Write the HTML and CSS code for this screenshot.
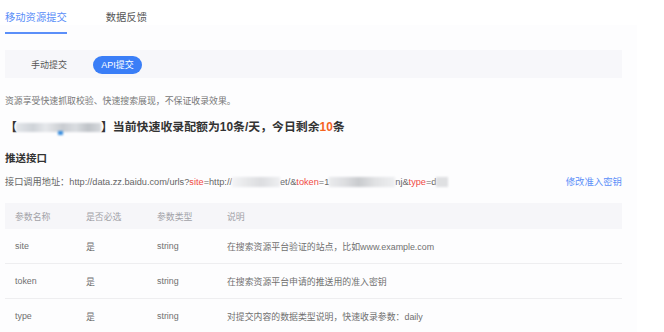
FILE: index.html
```html
<!DOCTYPE html>
<html lang="zh-CN">
<head>
<meta charset="utf-8">
<title>移动资源提交</title>
<link rel="stylesheet" href="styles.css">
</head>
<body>
<div class="page">
  <div class="tabs">
    <div class="tab active">移动资源提交</div>
    <div class="tab">数据反馈</div>
  </div>
  <div class="panel">
    <div class="subbar">
      <span class="sub">手动提交</span>
      <span class="pill">API提交</span>
    </div>
    <p class="desc">资源享受快速抓取校验、快速搜索展现，不保证收录效果。</p>
    <h2 class="quota"><span class="br">【</span><span class="blur blur-name"><i class="dot"></i></span><span class="br">】</span>当前快速收录配额为10条/天，今日剩余<span class="orange">10</span>条</h2>
    <h3 class="sect">推送接口</h3>
    <div class="urlrow">
      <div class="url">接口调用地址：http://data.zz.baidu.com/urls?<span class="red">site</span>=http://<span class="blur blur-a"></span>et/&amp;<span class="red">token</span>=1<span class="blur blur-b"></span>nj&amp;<span class="red">type</span>=d<span class="blur blur-c"></span></div>
      <a class="link">修改准入密钥</a>
    </div>
    <table class="params">
      <thead>
        <tr><th class="c1">参数名称</th><th class="c2">是否必选</th><th class="c3">参数类型</th><th>说明</th></tr>
      </thead>
      <tbody>
        <tr><td>site</td><td>是</td><td>string</td><td>在搜索资源平台验证的站点，比如www.example.com</td></tr>
        <tr><td>token</td><td>是</td><td>string</td><td>在搜索资源平台申请的推送用的准入密钥</td></tr>
        <tr><td>type</td><td>是</td><td>string</td><td>对提交内容的数据类型说明，快速收录参数：daily</td></tr>
      </tbody>
    </table>
  </div>
</div>
</body>
</html>
```

FILE: styles.css
```css
html, body {
  margin: 0;
  padding: 0;
  background: #fff;
}
body {
  font-family: "Liberation Sans", "Noto Sans CJK SC", sans-serif;
  color: #555;
  width: 664px;
  height: 332px;
  overflow: hidden;
}
.page {
  padding-left: 5px;
  width: 632px;
  background: linear-gradient(#fff 0, #fff 25px, #fdfdfe 25px);
  min-height: 332px;
}
.tabs {
  display: flex;
  height: 34px;
}
.tab {
  box-sizing: border-box;
  height: 34px;
  padding-top: 11px;
  font-size: 10.3px;
  line-height: 13px;
  color: #555;
  margin-right: 39px;
}
.tab.active {
  color: #5a8ef8;
  border-bottom: 2px solid #5b8ff9;
}
.panel {
  width: 617px;
}
.subbar {
  margin-top: 16px;
  height: 28px;
  background: #f7f7fa;
  display: flex;
  align-items: center;
  padding-left: 26px;
  font-size: 9px;
}
.sub {
  color: #555;
}
.pill {
  margin-left: 26px;
  width: 49px;
  height: 18px;
  border-radius: 9px;
  background: #3a7ef7;
  color: #fff;
  display: flex;
  align-items: center;
  justify-content: center;
  margin-top: 1px;
}
.desc {
  margin: 16px 0 0;
  font-size: 8.9px;
  line-height: 14px;
  color: #777;
}
.quota {
  margin: 10px 0 0;
  font-size: 11.9px;
  line-height: 18px;
  font-weight: bold;
  color: #333;
  display: flex;
  align-items: center;
  white-space: nowrap;
}
.br {
  display: inline-block;
}
.orange {
  color: #f5641e;
}
.blur {
  display: inline-block;
  position: relative;
  vertical-align: middle;
  filter: blur(1.2px);
}
.blur-name {
  width: 85px;
  height: 9px;
  margin: 0 0 0 -1px;
  background: linear-gradient(90deg, #e3e6ea 0, #cfd3d8 20%, #e6e8eb 35%, #c9ccd1 55%, #dadde1 70%, #bfc3c8 85%, #d6d9dd 100%);
}
.dot {
  position: absolute;
  left: 42px;
  bottom: -3px;
  width: 5px;
  height: 4px;
  background: #3a8fe0;
}
.sect {
  margin: 15px 0 0;
  font-size: 10.5px;
  line-height: 14px;
  font-weight: bold;
  color: #333;
}
.urlrow {
  margin-top: 10px;
  display: flex;
  justify-content: space-between;
  align-items: center;
  line-height: 14px;
}
.url {
  font-size: 9.2px;
  color: #666;
  white-space: nowrap;
  display: flex;
  align-items: center;
}
.red {
  color: #f04a45;
}
.blur-a {
  width: 48px;
  height: 10px;
  background: linear-gradient(90deg, #f4f4f6 0, #e7e8ea 30%, #dcdde0 60%, #eeeff1 100%);
}
.blur-b {
  width: 66px;
  height: 10px;
  background: linear-gradient(90deg, #eaebed 0, #dcdde0 25%, #c9cbce 45%, #e1e2e4 70%, #eeeff1 100%);
}
.blur-c {
  width: 12px;
  height: 10px;
  background: #dfe0e2;
}
.link {
  font-size: 9.4px;
  color: #5b8ff9;
  cursor: pointer;
}
.params {
  margin-top: 14px;
  width: 617px;
  border-collapse: collapse;
  font-size: 8.9px;
  table-layout: fixed;
}
.params th {
  background: #f6f6f9;
  color: #a2a2a8;
  font-weight: normal;
  text-align: left;
  height: 26px;
  padding: 0 0 0 10px;
}
.params th.c1 { width: 71px; }
.params th.c2 { width: 71px; padding-left: 0; }
.params th.c3 { width: 70px; padding-left: 0; }
.params th:last-child { padding-left: 0; }
.params td {
  height: 34px;
  padding: 0;
  color: #707070;
  border-bottom: 1px solid #eeeef0;
}
.params td:first-child {
  padding-left: 10px;
}
```
